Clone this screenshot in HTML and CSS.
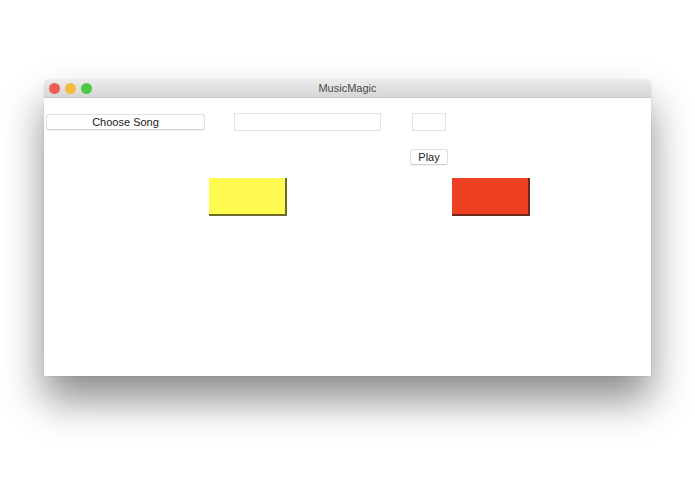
FILE: index.html
```html
<!DOCTYPE html>
<html>
<head>
<meta charset="utf-8">
<link rel="stylesheet" href="styles.css">
</head>
<body>
<div class="window">
  <div class="titlebar">
    <div class="lights">
      <span class="light red"></span>
      <span class="light yellow"></span>
      <span class="light green"></span>
    </div>
    <div class="title">MusicMagic</div>
  </div>
  <div class="content">
    <div class="row1">
      <button class="btn choose">Choose Song</button>
      <div class="field wide"></div>
      <div class="field small"></div>
    </div>
    <div class="row2">
      <button class="btn play">Play</button>
    </div>
    <div class="row3">
      <div class="block yellowblock"></div>
      <div class="block redblock"></div>
    </div>
  </div>
</div>
</body>
</html>
```
FILE: styles.css
```css
html, body {
  margin: 0;
  padding: 0;
  background: #ffffff;
  font-family: "Liberation Sans", Arial, sans-serif;
}
body {
  padding-top: 80px;
  padding-left: 44px;
  height: 494px;
  box-sizing: border-box;
  overflow: hidden;
}
.window {
  width: 607px;
  height: 296px;
  background: #ffffff;
  border-radius: 5px 5px 0 0;
  box-shadow: 0 24px 40px rgba(0,0,0,0.45), 0 0 1px rgba(0,0,0,0.35);
  display: flex;
  flex-direction: column;
}
.titlebar {
  height: 17px;
  background: linear-gradient(#ebebeb, #d6d6d6);
  border-bottom: 1px solid #c8c8c8;
  border-radius: 5px 5px 0 0;
  display: flex;
  align-items: center;
  position: relative;
}
.lights {
  display: flex;
  gap: 5px;
  padding-left: 5px;
}
.light {
  width: 11px;
  height: 11px;
  border-radius: 50%;
  display: block;
}
.light.red { background: #f25a54; }
.light.yellow { background: #f7bc3f; }
.light.green { background: #4dc643; }
.title {
  position: absolute;
  left: 0;
  right: 0;
  text-align: center;
  font-size: 11px;
  color: #4a4a4a;
  line-height: 17px;
}
.content {
  flex: 1;
  display: flex;
  flex-direction: column;
}
.row1 {
  display: flex;
  align-items: center;
  margin-top: 15px;
  height: 18px;
}
.btn {
  font-family: "Liberation Sans", Arial, sans-serif;
  font-size: 11px;
  color: #222;
  background: #ffffff;
  border: 1px solid #e0e0e0;
  border-bottom-color: #cfcfcf;
  border-radius: 3px;
  padding: 0;
  height: 16px;
  line-height: 14px;
  box-shadow: 0 1px 1px rgba(0,0,0,0.05);
}
.choose {
  margin-left: 2px;
  width: 159px;
}
.field {
  height: 18px;
  box-sizing: border-box;
  border: 1px solid #e2e2e2;
  background: #fff;
}
.wide {
  margin-left: 29px;
  width: 147px;
}
.small {
  margin-left: 31px;
  width: 34px;
}
.row2 {
  display: flex;
  margin-top: 18px;
  height: 16px;
}
.play {
  margin-left: 366px;
  width: 38px;
}
.row3 {
  display: flex;
  margin-top: 13px;
}
.block {
  width: 78px;
  height: 38px;
  box-sizing: border-box;
  border-right: 2px solid;
  border-bottom: 2px solid;
}
.yellowblock {
  margin-left: 165px;
  background: #fffa4f;
  border-color: #6e6a2c;
}
.redblock {
  margin-left: 165px;
  background: #ee4124;
  border-color: #6b2a1e;
}
```
